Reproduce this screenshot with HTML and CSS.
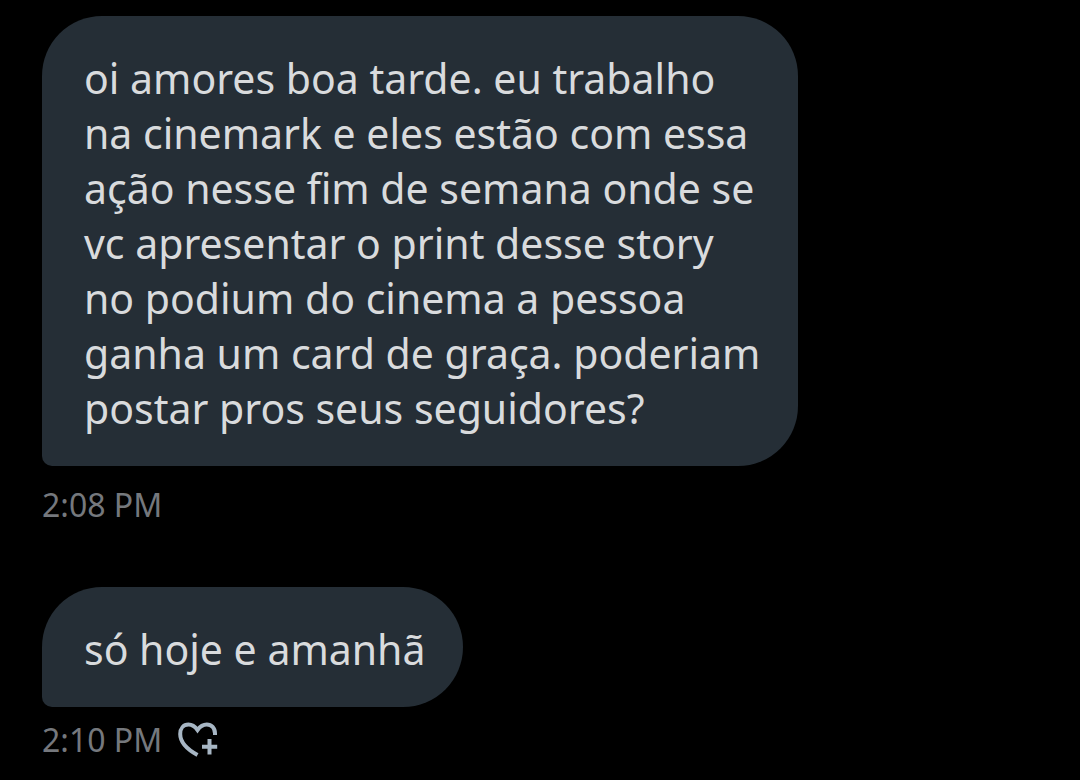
FILE: index.html
```
<!DOCTYPE html>
<html lang="pt-BR">
<head>
  <meta charset="UTF-8" />
  <meta name="viewport" content="width=device-width, initial-scale=1.0" />
  <title>Mensagens</title>
  <link rel="stylesheet" href="styles.css">
</head>
<body>
  <main class="chat">
    <article class="message">
      <p class="bubble">oi amores boa tarde. eu trabalho<br>
        na cinemark e eles estão com essa<br>
        ação nesse fim de semana onde se<br>
        vc apresentar o print desse story<br>
        no podium do cinema a pessoa<br>
        ganha um card de graça. poderiam<br>
        postar pros seus seguidores?</p>
      <div class="meta"><time datetime="14:08">2:08 PM</time></div>
    </article>
    <article class="message">
      <p class="bubble">só hoje e amanhã</p>
      <div class="meta meta-last">
        <time datetime="14:10">2:10 PM</time>
        <button class="react" type="button" aria-label="Reagir">
          <svg viewBox="0 0 40 36" width="40" height="36" aria-hidden="true">
            <path class="heart" d="M37 13V11.500C37 6 33.500 2.600 28.800 2.600C25 2.600 22 4.600 19.500 8C17 4.600 13.800 2.600 10.500 2.600C5.500 2.600 2.200 6.500 2.200 12C2.200 20 8.500 27 19.500 33" />
            <path class="plus" d="M31.500 17V32.500M24 24.700H39.200" />
          </svg>
        </button>
      </div>
    </article>
  </main>
</body>
</html>
```
FILE: styles.css
```
* { box-sizing: border-box; }
body { margin: 0; background: #000; color: #d9dbdd; font-family: "Noto Sans", "Open Sans", sans-serif; }
.chat { display: flex; flex-direction: column; gap: 60px; padding: 16px 42px 0; }
.message { display: flex; flex-direction: column; align-items: flex-start; }
.bubble { margin: 0; padding: 35px 38px 30px 42px; background: #252e36; border-radius: 60px 60px 60px 10px; font-size: 41px; line-height: 55px; }
.meta { display: flex; align-items: center; gap: 16px; margin-top: 16px; color: #75787d; font-size: 32px; line-height: 45px; }
.meta-last { margin-top: 10px; }
.react { padding: 0; border: none; background: none; cursor: pointer; }
.react svg { display: block; }
.heart, .plus { fill: none; stroke: #a7b6c4; stroke-width: 4; }
```
